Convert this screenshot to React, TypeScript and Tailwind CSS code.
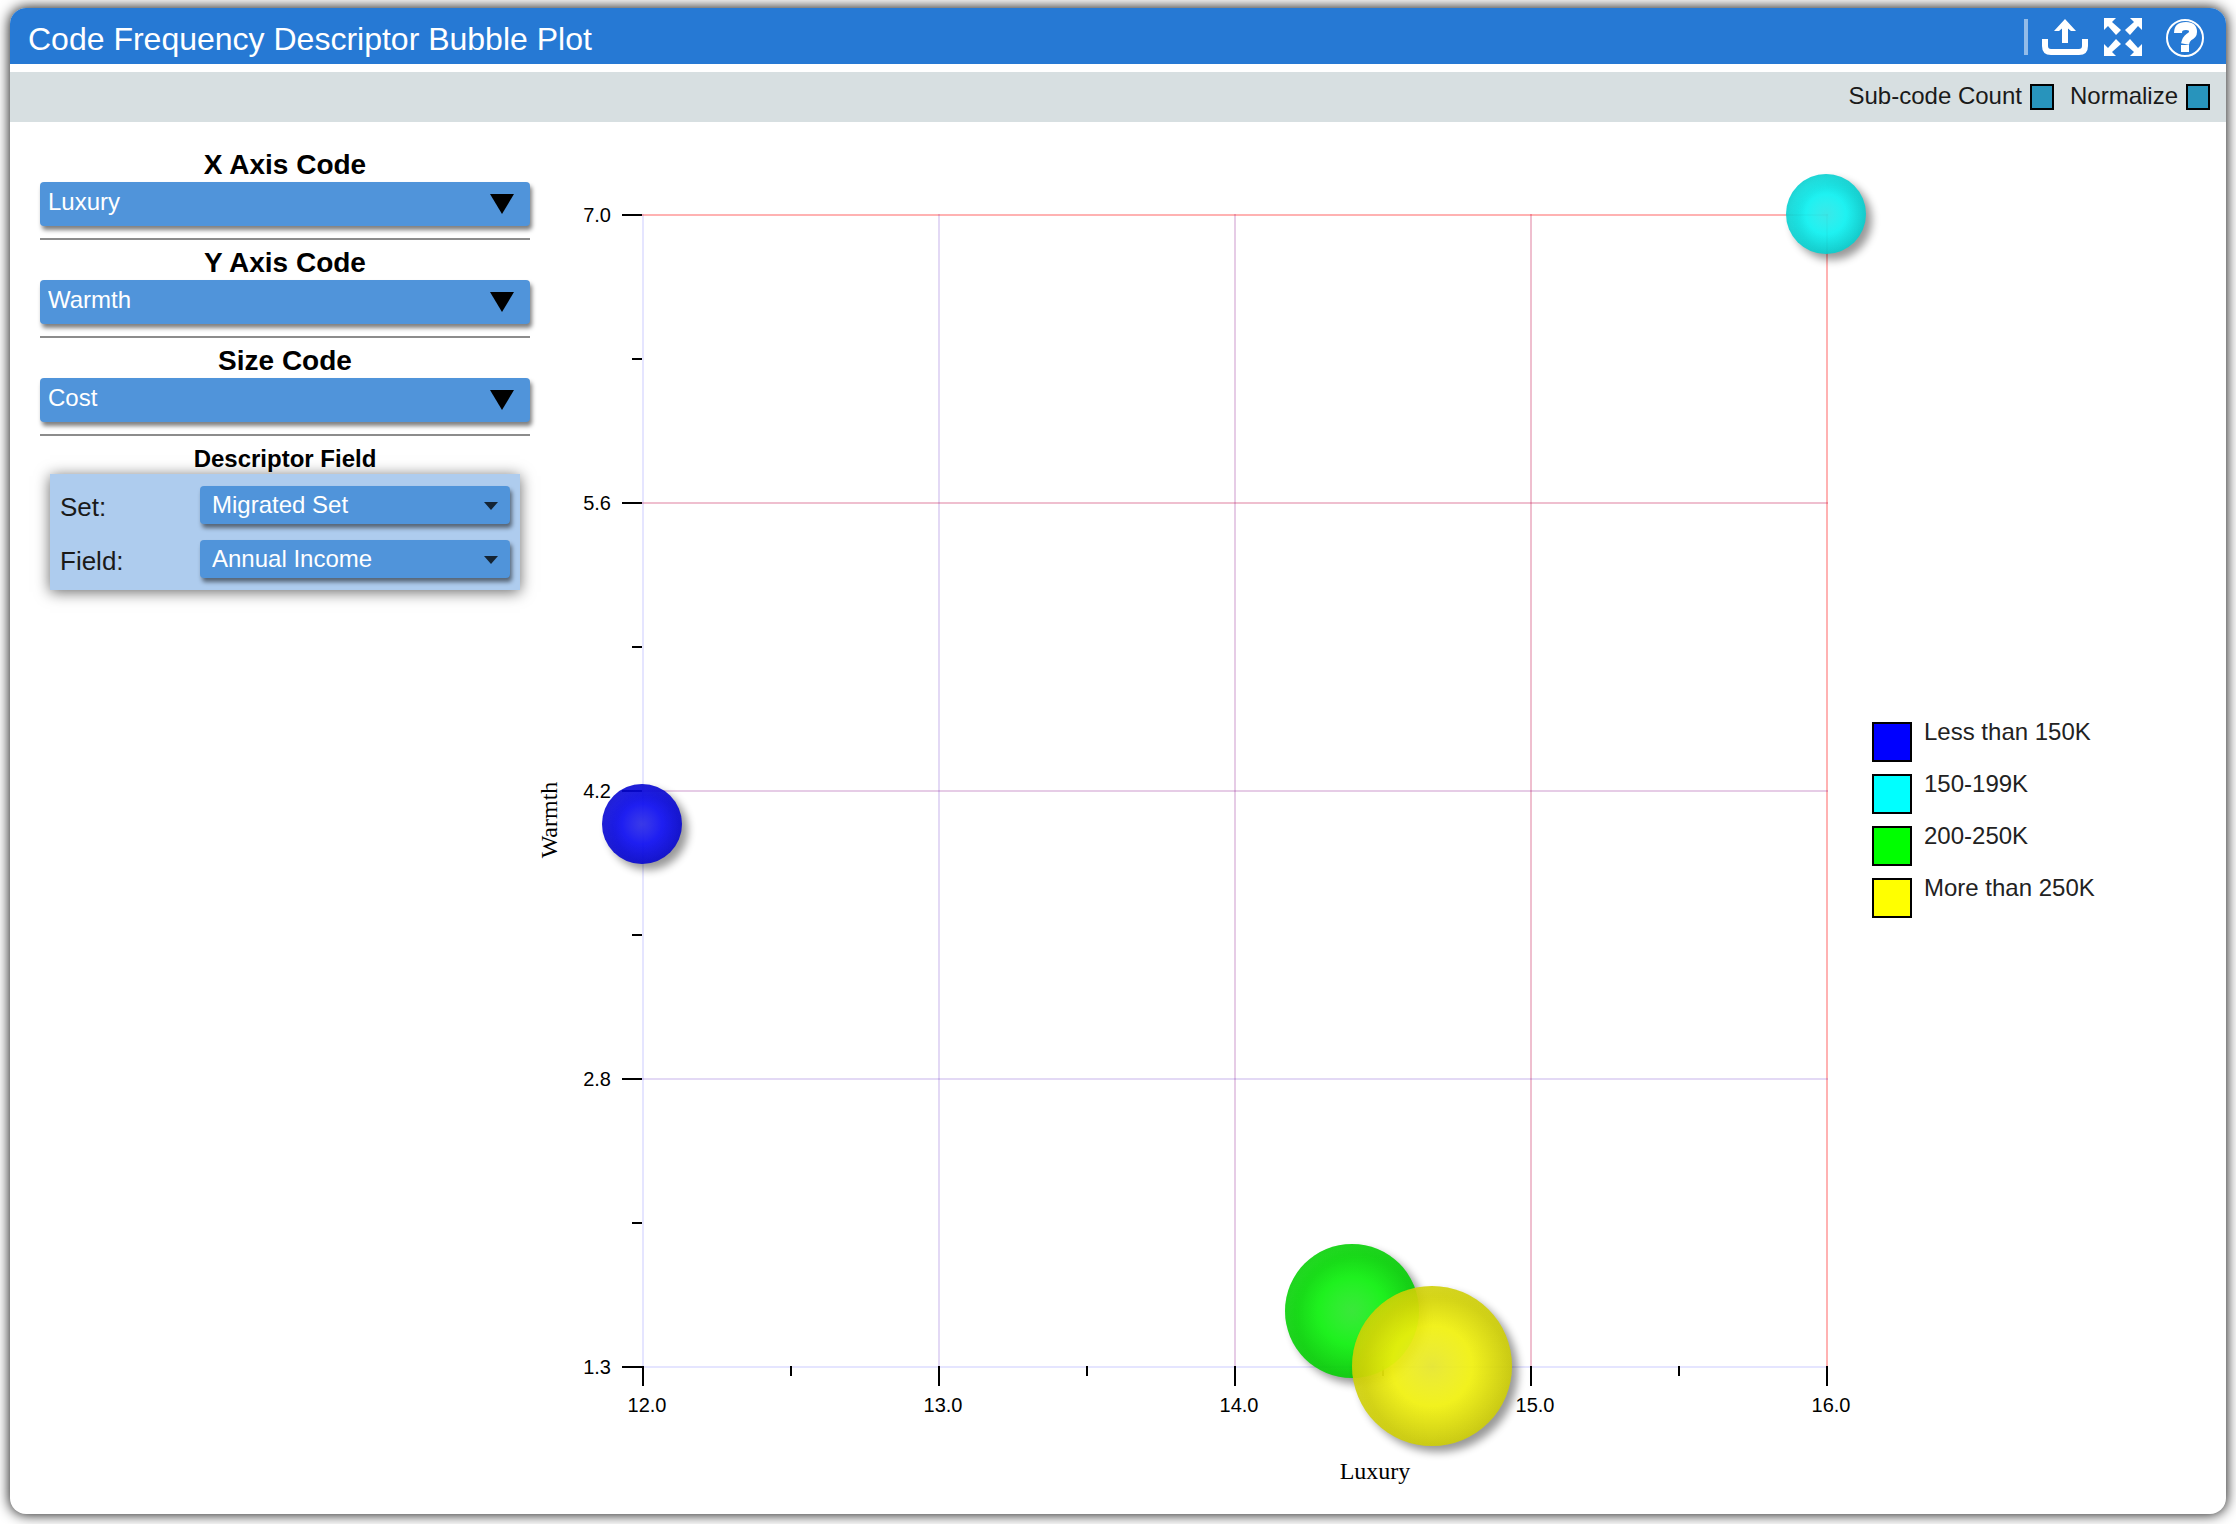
import { useState } from "react"

const xTicks = [
  { x: 113, label: "12.0", color: "rgb(0 0 255 / 0.1)" },
  { x: 409, label: "13.0", color: "rgb(64 0 191 / 0.15)" },
  { x: 705, label: "14.0", color: "rgb(128 0 128 / 0.2)" },
  { x: 1001, label: "15.0", color: "rgb(191 0 64 / 0.25)" },
  { x: 1297, label: "16.0", color: "rgb(255 0 0 / 0.3)" },
]

const yTicks = [
  { y: 93, label: "7.0", color: "rgb(255 0 0 / 0.3)" },
  { y: 381, label: "5.6", color: "rgb(191 0 64 / 0.25)" },
  { y: 669, label: "4.2", color: "rgb(128 0 128 / 0.2)" },
  { y: 957, label: "2.8", color: "rgb(64 0 191 / 0.15)" },
  { y: 1245, label: "1.3", color: "rgb(0 0 255 / 0.1)" },
]

const bubbles = [
  { name: "Less than 150K", color: "#0000ff", cx: 112, cy: 702, r: 40 },
  { name: "150-199K", color: "#00ffff", cx: 1296, cy: 92, r: 40 },
  { name: "200-250K", color: "#00ff00", cx: 822, cy: 1189, r: 67 },
  { name: "More than 250K", color: "#ffff00", cx: 902, cy: 1244, r: 80 },
]

function Header() {
  return (
    <header className="flex h-14 items-center justify-between rounded-t-[16px] bg-[#2679d4] pt-0.5 pr-5 pl-[18px]">
      <h1 className="pt-1 text-[32px] leading-8 text-white">
        Code Frequency Descriptor Bubble Plot
      </h1>
      <div className="flex items-center text-white">
        <span className="mr-3.5 h-9 w-1 bg-[#93bce9]" />
        <button type="button" aria-label="Export" className="mr-4">
          <svg width="46" height="38" viewBox="0 0 46 38" fill="none" stroke="currentColor">
            <path d="M3 21v7q0 6 6 6h28q6 0 6-6v-7" strokeWidth="6" />
            <path d="M23 25V6" strokeWidth="6" />
            <path d="M12 13 23 1l11 12h-5l-6-5-6 5z" fill="currentColor" stroke="none" />
          </svg>
        </button>
        <button type="button" aria-label="Full screen" className="mr-6">
          <svg width="38" height="38" viewBox="0 0 38 38" fill="currentColor">
            <path id="arrow" d="M0 0h12l-4 4 9 8-5 5-8-9-4 4z" />
            <use href="#arrow" transform="matrix(-1 0 0 1 38 0)" />
            <use href="#arrow" transform="matrix(1 0 0 -1 0 38)" />
            <use href="#arrow" transform="matrix(-1 0 0 -1 38 38)" />
          </svg>
        </button>
        <button type="button" aria-label="Help">
          <svg width="40" height="40" viewBox="0 0 40 40" fill="none" stroke="currentColor">
            <circle cx="19" cy="21" r="18" strokeWidth="2" />
            <path d="M12 16q0-7 8-7 7 0 7 6 0 3-4 5-3 2-4 7" strokeWidth="8" />
            <path d="M15 28h8v7h-8z" fill="currentColor" stroke="none" />
          </svg>
        </button>
      </div>
    </header>
  )
}

function Toggle({ label }: { label: string }) {
  const [on, setOn] = useState(false)

  return (
    <label className="flex items-start gap-2 text-2xl leading-6 text-[#1a1a1a]">
      {label}
      <input
        type="checkbox"
        checked={on}
        onChange={(e) => setOn(e.target.checked)}
        className="h-[26px] w-6 appearance-none border-2 border-black bg-[#2894bc] checked:bg-[#0b4f6c]"
      />
    </label>
  )
}

function CodePicker({ id, title, value }: { id: string; title: string; value: string }) {
  return (
    <div className="mb-2 border-b-2 border-[#8c8c8c] pb-3">
      <label htmlFor={id} className="block pb-0.5 text-center text-[28px] leading-[30px] font-bold">
        {title}
      </label>
      <div className="relative">
        <select
          id={id}
          className="block h-11 w-full appearance-none rounded bg-[#5094da] pb-1 pl-2 text-2xl leading-8 text-white shadow-[2px_4px_4px_rgba(0,0,0,0.5)]"
        >
          <option>{value}</option>
        </select>
        <svg
          className="pointer-events-none absolute top-3 right-4"
          width="24"
          height="20"
          viewBox="0 0 24 20"
        >
          <path d="M0 0h24L12 20z" />
        </svg>
      </div>
    </div>
  )
}

function FieldPicker({ id, label, value }: { id: string; label: string; value: string }) {
  return (
    <div className="flex items-center justify-between">
      <label htmlFor={id} className="pt-1 text-[26px] leading-8 text-[#1a1a1a]">
        {label}
      </label>
      <div className="relative w-[310px]">
        <select
          id={id}
          className="block h-[38px] w-full appearance-none rounded bg-[#5094da] pl-3 text-2xl leading-8 text-white shadow-[2px_4px_4px_rgba(0,0,0,0.5)]"
        >
          <option>{value}</option>
        </select>
        <svg
          className="pointer-events-none absolute top-4 right-3"
          width="14"
          height="8"
          viewBox="0 0 14 8"
        >
          <path d="M0 0h14L7 8z" fill="#142434" />
        </svg>
      </div>
    </div>
  )
}

function Chart() {
  return (
    <svg viewBox="0 0 1342 1392" className="h-auto min-w-0 flex-1 overflow-visible">
      <defs>
        <radialGradient id="shade">
          <stop offset="0.5" stopColor="#000" stopOpacity="0" />
          <stop offset="1" stopColor="#000" stopOpacity="0.17" />
        </radialGradient>
        <radialGradient id="glow">
          <stop offset="0" stopColor="#c0c0c0" stopOpacity="0.22" />
          <stop offset="0.5" stopColor="#e0e0e0" stopOpacity="0.05" />
          <stop offset="1" stopColor="#e0e0e0" stopOpacity="0.02" />
        </radialGradient>
        <filter id="blur" x="-20%" y="-20%" width="140%" height="140%">
          <feGaussianBlur stdDeviation="4" />
        </filter>
      </defs>

      <g strokeWidth="2">
        {xTicks.map((t) => (
          <line key={t.label} x1={t.x} x2={t.x} y1="92" y2="1246" stroke={t.color} />
        ))}
        {yTicks.map((t) => (
          <line key={t.label} x1="112" x2="1298" y1={t.y} y2={t.y} stroke={t.color} />
        ))}
      </g>

      <g stroke="#000" strokeWidth="2">
        {xTicks.map((t) => (
          <line key={t.label} x1={t.x} x2={t.x} y1="1244" y2="1264" />
        ))}
        {yTicks.map((t) => (
          <line key={t.label} x1="92" x2="112" y1={t.y} y2={t.y} />
        ))}
        {xTicks.slice(1).map((t) => (
          <line key={t.label} x1={t.x - 148} x2={t.x - 148} y1="1244" y2="1254" />
        ))}
        {yTicks.slice(1).map((t) => (
          <line key={t.label} x1="102" x2="112" y1={t.y - 144} y2={t.y - 144} />
        ))}
      </g>

      <g className="text-[20px]">
        {xTicks.map((t) => (
          <text key={t.label} x={t.x + 4} y="1290" textAnchor="middle">
            {t.label}
          </text>
        ))}
        {yTicks.map((t) => (
          <text key={t.label} x="81" y={t.y + 7} textAnchor="end">
            {t.label}
          </text>
        ))}
      </g>

      <g className="font-['Liberation_Serif',serif] text-[24px]">
        <text x="845" y="1357" textAnchor="middle">
          Luxury
        </text>
        <text transform="translate(27 698) rotate(-90)" textAnchor="middle">
          Warmth
        </text>
      </g>

      {bubbles.map((b) => (
        <g key={b.name}>
          <circle cx={b.cx + 6} cy={b.cy + 6} r={b.r} opacity="0.4" filter="url(#blur)" />
          <circle cx={b.cx} cy={b.cy} r={b.r} fill={b.color} fillOpacity="0.87" />
          <circle cx={b.cx} cy={b.cy} r={b.r} fill="url(#shade)" />
          <circle cx={b.cx} cy={b.cy} r={b.r} fill="url(#glow)" />
        </g>
      ))}
    </svg>
  )
}

function Legend() {
  return (
    <ul className="flex w-[354px] flex-col gap-3 self-center pt-1">
      {bubbles.map((b) => (
        <li key={b.name} className="flex items-start gap-3 text-2xl leading-5 text-[#222]">
          <span
            className="size-10 border-2 border-black"
            style={{ backgroundColor: b.color }}
          />
          {b.name}
        </li>
      ))}
    </ul>
  )
}

export default function App() {
  return (
    <div className="bg-white px-2.5 pt-2 pb-2.5 font-['Liberation_Sans',Arial,sans-serif] text-black">
      <div className="rounded-[16px] bg-white shadow-[0_0_14px_#000]">
        <Header />
        <div className="mt-2 flex h-[50px] items-start justify-end gap-4 bg-[#d7dfe1] pt-3 pr-4">
          <Toggle label="Sub-code Count" />
          <Toggle label="Normalize" />
        </div>
        <main className="flex items-start">
          <aside className="ml-[30px] w-[490px] pt-7">
            <CodePicker id="x-code" title="X Axis Code" value="Luxury" />
            <CodePicker id="y-code" title="Y Axis Code" value="Warmth" />
            <CodePicker id="size-code" title="Size Code" value="Cost" />
            <h2 className="text-center text-2xl leading-[30px] font-bold">Descriptor Field</h2>
            <div className="mx-2.5 flex flex-col gap-4 bg-[#aeccee] px-2.5 py-3 shadow-[0_2px_14px_rgba(0,0,0,0.6)]">
              <FieldPicker id="set" label="Set:" value="Migrated Set" />
              <FieldPicker id="field" label="Field:" value="Annual Income" />
            </div>
          </aside>
          <Chart />
          <Legend />
        </main>
      </div>
    </div>
  )
}
